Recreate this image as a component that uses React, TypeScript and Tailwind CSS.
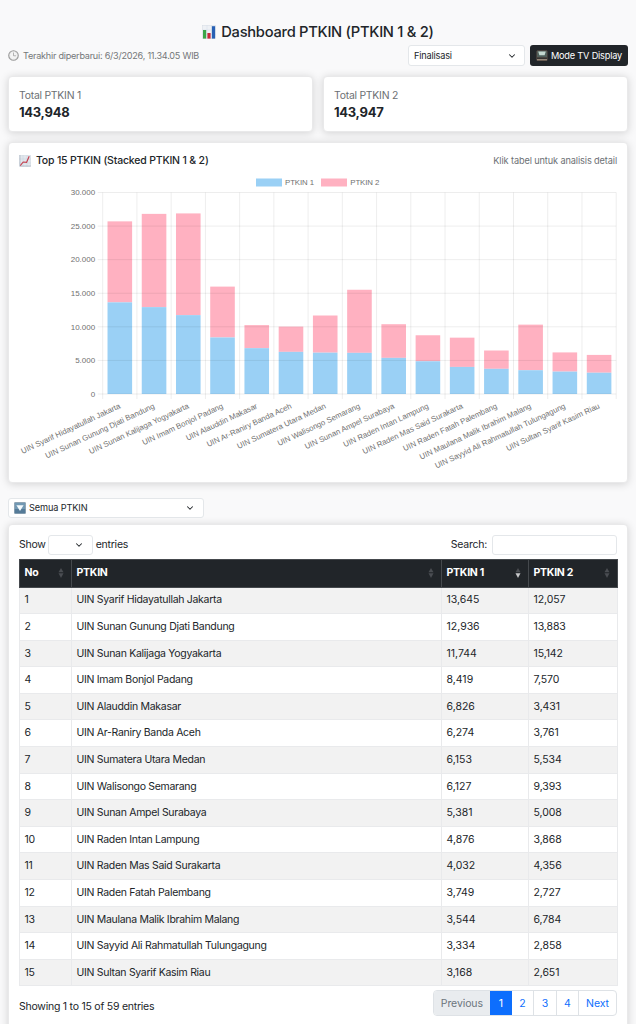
import { ChevronDown } from "lucide-react";

type Campus = {
    name: string;
    ptkin1: number;
    ptkin2: number;
};

const campuses: Campus[] = [
    { name: "UIN Syarif Hidayatullah Jakarta", ptkin1: 13645, ptkin2: 12057 },
    { name: "UIN Sunan Gunung Djati Bandung", ptkin1: 12936, ptkin2: 13883 },
    { name: "UIN Sunan Kalijaga Yogyakarta", ptkin1: 11744, ptkin2: 15142 },
    { name: "UIN Imam Bonjol Padang", ptkin1: 8419, ptkin2: 7570 },
    { name: "UIN Alauddin Makasar", ptkin1: 6826, ptkin2: 3431 },
    { name: "UIN Ar-Raniry Banda Aceh", ptkin1: 6274, ptkin2: 3761 },
    { name: "UIN Sumatera Utara Medan", ptkin1: 6153, ptkin2: 5534 },
    { name: "UIN Walisongo Semarang", ptkin1: 6127, ptkin2: 9393 },
    { name: "UIN Sunan Ampel Surabaya", ptkin1: 5381, ptkin2: 5008 },
    { name: "UIN Raden Intan Lampung", ptkin1: 4876, ptkin2: 3868 },
    { name: "UIN Raden Mas Said Surakarta", ptkin1: 4032, ptkin2: 4356 },
    { name: "UIN Raden Fatah Palembang", ptkin1: 3749, ptkin2: 2727 },
    { name: "UIN Maulana Malik Ibrahim Malang", ptkin1: 3544, ptkin2: 6784 },
    { name: "UIN Sayyid Ali Rahmatullah Tulungagung", ptkin1: 3334, ptkin2: 2858 },
    { name: "UIN Sultan Syarif Kasim Riau", ptkin1: 3168, ptkin2: 2651 },
];

const ticks = [0, 5000, 10000, 15000, 20000, 25000, 30000];

// chart area inside the svg
const LEFT = 83.7;
const RIGHT = 597.2;
const TOP = 20.5;
const BOTTOM = 222;
const STEP = (RIGHT - LEFT) / campuses.length;
const BAR = 24.6;

const yOf = (value: number) => BOTTOM - (value / 30000) * (BOTTOM - TOP);

function BarsIcon() {
    return (
        <svg viewBox="0 0 14 14" className="h-[14px] w-[14px]">
            <rect x="0.3" y="0.3" width="13.4" height="13.4" fill="#eef1f5" stroke="#d5dce4" strokeWidth="0.5" />
            <path d="M0 5h14M0 9.5h14M5 0v14M9.5 0v14" stroke="#d5dee8" strokeWidth="0.5" />
            <rect x="1" y="5" width="3.2" height="8.6" fill="#3aa648" />
            <rect x="5.4" y="8" width="3.2" height="5.6" fill="#c9293b" />
            <rect x="9.9" y="1.2" width="3.2" height="12.4" fill="#2860b4" />
        </svg>
    );
}

function TrendIcon() {
    return (
        <svg viewBox="0 0 12 12" className="h-[12px] w-[12px]">
            <rect x="0.3" y="0.3" width="11.4" height="11.4" fill="#e2e7ed" stroke="#cfd7e0" strokeWidth="0.5" />
            <path d="M0 4h12M0 8h12M4 0v12M8 0v12" stroke="#c7d3df" strokeWidth="0.5" />
            <path d="M1 0v11h11" fill="none" stroke="#a5b0bc" strokeWidth="0.6" />
            <path d="M1.3 10.6 4.2 7 7.6 7.3 10.2 1.2" fill="none" stroke="#c4404f" strokeWidth="1.1" />
        </svg>
    );
}

function ClockIcon() {
    return (
        <svg viewBox="0 0 12 12" className="h-[11px] w-[11px]">
            <circle cx="6" cy="6" r="5.2" fill="#f4f4f4" stroke="#9a9a9a" strokeWidth="1.2" />
            <circle cx="6" cy="6" r="3.9" fill="none" stroke="#c4c4c4" strokeWidth="0.6" strokeDasharray="0.5 1.5" />
            <path d="M6 2.8V6.3H8.7" fill="none" stroke="#999" strokeWidth="0.8" />
        </svg>
    );
}

function TvIcon() {
    return (
        <svg viewBox="0 0 12 12" className="h-[12px] w-[12px]">
            <rect x="0.6" y="0.6" width="10.8" height="10.2" rx="0.8" fill="#6f5f54" />
            <rect x="1.2" y="1" width="9.6" height="6.2" rx="1" fill="#4e5f5b" />
            <path d="M2.2 1.6h7.6L8.6 5.2H3.4z" fill="#c3d8d0" />
            <path d="M1 7.4h10v1.8H1z" fill="#333231" />
            <path d="M1 9.7h10" stroke="#a99a8b" strokeWidth="0.9" />
        </svg>
    );
}

function DownIcon() {
    return (
        <svg viewBox="0 0 12 12" className="h-[12px] w-[12px]">
            <rect x="0.3" y="0.3" width="11.4" height="11.4" rx="1.2" fill="#7198b3" stroke="#8995a0" strokeWidth="0.6" />
            <path d="M0.8 7h10.4v4.2H0.8z" fill="#557b98" />
            <path d="M2.4 3.3h7.2L6 9z" fill="#f4fafd" />
        </svg>
    );
}

function SortIcon({ active }: { active?: boolean }) {
    return (
        <svg viewBox="0 0 6 12" className="h-[12px] w-[6px]">
            <path d="M3 1 5.5 5.3H.5z" fill="#4a4d52" />
            <path d="M3 11 .5 6.2h5z" fill={active ? "#c7c8ca" : "#4a4d52"} />
        </svg>
    );
}

function StackedChart() {
    return (
        <svg viewBox="0 0 598 300" className="block h-[300px] w-[598px] tracking-normal" fontFamily="Liberation Sans, Arial, sans-serif" fontSize="7.83" fill="#707070">
            <rect x="237" y="6.5" width="26" height="8" fill="#9ad0f5" />
            <text x="266" y="13.3" textLength="29">PTKIN 1</text>
            <rect x="302" y="6.5" width="26" height="8" fill="#ffb1c1" />
            <text x="331.3" y="13.3" textLength="29">PTKIN 2</text>

            {campuses.map((campus, i) => {
                const x = LEFT + STEP * i + (STEP - BAR) / 2;
                const split = yOf(campus.ptkin1);
                const top = yOf(campus.ptkin1 + campus.ptkin2);
                return (
                    <g key={campus.name}>
                        <rect x={x} y={top} width={BAR} height={split - top} fill="#ffb1c1" />
                        <rect x={x} y={split} width={BAR} height={BOTTOM - split} fill="#9ad0f5" />
                    </g>
                );
            })}

            {ticks.map((tick) => (
                <g key={tick}>
                    <path d={`M${LEFT - 5} ${yOf(tick)}H${RIGHT}`} stroke="#000" strokeOpacity="0.09" strokeWidth="0.8" />
                    <text x={LEFT - 7.5} y={yOf(tick) + 2.8} textAnchor="end" fontSize="8">{tick.toLocaleString("de-DE")}</text>
                </g>
            ))}
            {[...campuses, null].map((_, i) => (
                <path key={i} d={`M${LEFT + STEP * i} ${TOP}V${BOTTOM + 5}`} stroke="#000" strokeOpacity="0.09" strokeWidth="0.8" />
            ))}

            {campuses.map((campus, i) => (
                <text
                    key={campus.name}
                    textAnchor="end"
                    transform={`translate(${LEFT + STEP * (i + 0.5) + 1.2} ${BOTTOM + 13.8}) rotate(-25.1)`}
                >
                    {campus.name}
                </text>
            ))}
        </svg>
    );
}

function TotalCard({ label, value }: { label: string; value: string }) {
    return (
        <div className="h-[56px] flex-1 rounded-[4px] border border-[#e9e9ea] bg-white pl-[10px] pt-[11px] shadow-[0_1px_8px_rgba(0,0,0,0.16)]">
            <p className="text-[10.4px] leading-[16px] tracking-[-0.23px] text-[#6c6f73]">{label}</p>
            <p className="text-[13px] font-bold leading-[17px] tracking-[-0.3px]">{value}</p>
        </div>
    );
}

function App() {
    return (
        <div className="h-screen overflow-hidden bg-[#f9f9fa] px-2 font-['Inter',sans-serif] text-[10.5px] tracking-[-0.24px] text-[#212529]">
            <h1 className="flex items-center justify-center gap-[5px] pt-[22px] text-[14.7px] font-medium leading-[20px] tracking-[-0.27px]">
                <BarsIcon />
                Dashboard PTKIN (PTKIN 1 &amp; 2)
            </h1>

            <div className="mt-[3px] flex h-[21px] items-center justify-between">
                <div className="flex items-center gap-1 text-[9.1px] text-[#747779]">
                    <ClockIcon />
                    Terakhir diperbarui: 6/3/2026, 11.34.05 WIB
                </div>
                <div className="flex gap-[5px] text-[9.2px] tracking-[-0.19px]">
                    <button className="flex h-[21px] w-[117px] items-center justify-between rounded-[3px] border border-[#e4e7ea] bg-white pl-[5px] pr-[7px]">
                        Finalisasi
                        <ChevronDown size={10} strokeWidth={2.5} />
                    </button>
                    <button className="flex h-[21px] w-[98px] items-center justify-center gap-[3px] whitespace-nowrap rounded-[3px] bg-[#212529] text-white">
                        <TvIcon />
                        Mode TV Display
                    </button>
                </div>
            </div>

            <div className="mt-[10px] flex gap-[10px]">
                <TotalCard label="Total PTKIN 1" value="143,948" />
                <TotalCard label="Total PTKIN 2" value="143,947" />
            </div>

            <section className="mt-[10px] h-[341px] rounded-[4px] border border-[#e9e9ea] bg-white px-[10px] shadow-[0_1px_8px_rgba(0,0,0,0.16)]">
                <div className="flex h-[29px] items-end justify-between pb-[3px]">
                    <h2 className="flex items-center gap-[5px] text-[10.5px] font-medium leading-[16px] tracking-[-0.18px]">
                        <TrendIcon />
                        Top 15 PTKIN (Stacked PTKIN 1 &amp; 2)
                    </h2>
                    <span className="text-[9.2px] leading-[16px] tracking-[-0.12px] text-[#6c7074]">Klik tabel untuk analisis detail</span>
                </div>
                <StackedChart />
            </section>

            <button className="mt-[15px] flex h-[20px] w-[196px] items-center gap-[3px] rounded-[3px] border border-[#e4e7ea] bg-white pl-[5px] pr-[8px] text-[9.2px] tracking-[-0.12px]">
                <DownIcon />
                Semua PTKIN
                <ChevronDown className="ml-auto" size={10} strokeWidth={2.5} />
            </button>

            <section className="mt-[6px] h-[520px] rounded-[4px] border border-[#e9e9ea] bg-white px-[10px] pt-[10px] shadow-[0_1px_8px_rgba(0,0,0,0.16)]">
                <div className="flex h-[20px] items-center justify-between">
                    <div className="flex items-center">
                        Show
                        <span className="ml-[2px] mr-[3px] flex h-[20px] w-[45px] items-center justify-end rounded-[3px] border border-[#e4e7ea] pr-[8px]">
                            <ChevronDown size={10} strokeWidth={2.5} />
                        </span>
                        entries
                    </div>
                    <label className="flex items-center gap-[5px]">
                        Search:
                        <input className="h-[20px] w-[125px] rounded-[3px] border border-[#e4e7ea]" />
                    </label>
                </div>

                <table className="mt-[4px] w-[598px] table-fixed border-collapse">
                    <colgroup>
                        <col className="w-[52px]" />
                        <col className="w-[370px]" />
                        <col className="w-[87px]" />
                        <col className="w-[89px]" />
                    </colgroup>
                    <thead>
                        <tr className="h-[27.5px] bg-[#212529] text-left text-white">
                            {["No", "PTKIN", "PTKIN 1", "PTKIN 2"].map((title) => (
                                <th key={title} className="border border-[#45494d] p-0 pl-[4.5px] pr-[7px] font-bold">
                                    <div className="flex items-center justify-between">
                                        {title}
                                        <SortIcon active={title === "PTKIN 1"} />
                                    </div>
                                </th>
                            ))}
                        </tr>
                    </thead>
                    <tbody>
                        {campuses.map((campus, i) => (
                            <tr key={campus.name} className="h-[26.6px] odd:bg-[#f2f2f2]">
                                <td className="border border-[#e9eaec] p-0 pl-[4.5px]">{i + 1}</td>
                                <td className="border border-[#e9eaec] p-0 pl-[4.5px] tracking-[-0.3px]">{campus.name}</td>
                                <td className="border border-[#e9eaec] p-0 pl-[4.5px] tracking-normal">{campus.ptkin1.toLocaleString("en-US")}</td>
                                <td className="border border-[#e9eaec] p-0 pl-[4.5px] tracking-[-0.1px]">{campus.ptkin2.toLocaleString("en-US")}</td>
                            </tr>
                        ))}
                    </tbody>
                </table>

                <div className="mt-[4px] flex justify-between">
                    <p className="pt-[9px] leading-[16px]">Showing 1 to 15 of 59 entries</p>
                    <nav className="flex h-[26px] overflow-hidden rounded-[4px] border border-[#dee2e6] tracking-[-0.1px] text-[#0d6efd]">
                        <span className="flex w-[56px] items-center justify-center bg-[#e9ecef] text-[#6c757d]">Previous</span>
                        <span className="flex w-[22px] items-center justify-center bg-[#0d6efd] text-white">1</span>
                        {["2", "3", "4"].map((page) => (
                            <span key={page} className="flex w-[22.4px] items-center justify-center border-r border-[#dee2e6]">{page}</span>
                        ))}
                        <span className="flex w-[37px] items-center justify-center">Next</span>
                    </nav>
                </div>
            </section>
        </div>
    );
}

export default App;
